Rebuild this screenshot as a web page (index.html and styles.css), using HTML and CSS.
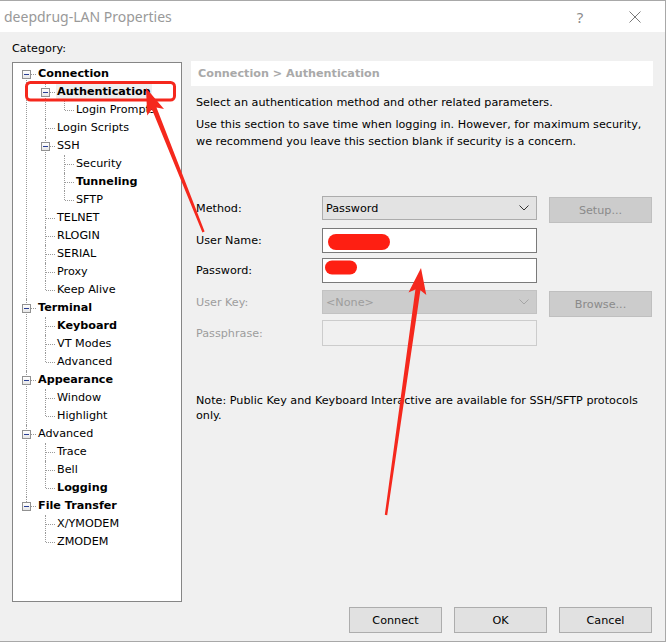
FILE: index.html
```html
<!DOCTYPE html>
<html>
<head>
<meta charset="utf-8">
<title>deepdrug-LAN Properties</title>
<link rel="stylesheet" href="styles.css">
</head>
<body>
<div class="window">
  <div class="titlebar">
    <span class="title">deepdrug-LAN Properties</span>
    <span class="help">?</span>
    <span class="close"><svg width="12" height="12" viewBox="0 0 12 12"><path d="M0.5 0.5L11.5 11.5M11.5 0.5L0.5 11.5" stroke="#7a7a7a" stroke-width="1" fill="none"/></svg></span>
  </div>
  <div class="main">
    <div class="left">
      <div class="cat-label">Category:</div>
      <div class="tree-box">
        <ul class="tree">
          <li><span class="exp"></span><span class="label b">Connection</span>
            <ul>
              <li><span class="exp"></span><span class="label b sel">Authentication</span>
                <ul><li><span class="label">Login Prompts</span></li></ul>
              </li>
              <li><span class="label">Login Scripts</span></li>
              <li><span class="exp"></span><span class="label">SSH</span>
                <ul>
                  <li><span class="label">Security</span></li>
                  <li><span class="label b">Tunneling</span></li>
                  <li><span class="label">SFTP</span></li>
                </ul>
              </li>
              <li><span class="label">TELNET</span></li>
              <li><span class="label">RLOGIN</span></li>
              <li><span class="label">SERIAL</span></li>
              <li><span class="label">Proxy</span></li>
              <li><span class="label">Keep Alive</span></li>
            </ul>
          </li>
          <li><span class="exp"></span><span class="label b">Terminal</span>
            <ul>
              <li><span class="label b">Keyboard</span></li>
              <li><span class="label">VT Modes</span></li>
              <li><span class="label">Advanced</span></li>
            </ul>
          </li>
          <li><span class="exp"></span><span class="label b">Appearance</span>
            <ul>
              <li><span class="label">Window</span></li>
              <li><span class="label">Highlight</span></li>
            </ul>
          </li>
          <li><span class="exp"></span><span class="label">Advanced</span>
            <ul>
              <li><span class="label">Trace</span></li>
              <li><span class="label">Bell</span></li>
              <li><span class="label b">Logging</span></li>
            </ul>
          </li>
          <li><span class="exp"></span><span class="label b">File Transfer</span>
            <ul>
              <li><span class="label">X/YMODEM</span></li>
              <li><span class="label">ZMODEM</span></li>
            </ul>
          </li>
        </ul>
      </div>
    </div>
    <div class="right">
      <div class="crumb">Connection &gt; Authentication</div>
      <div class="panel">
        <p class="desc first">Select an authentication method and other related parameters.</p>
        <p class="desc">Use this section to save time when logging in. However, for maximum security,<br>we recommend you leave this section blank if security is a concern.</p>
        <div class="form">
          <span class="flabel">Method:</span>
          <div class="select"><span>Password</span><svg width="10" height="6" viewBox="0 0 10 6"><path d="M0.5 0.5L5 5L9.5 0.5" stroke="#333" fill="none"/></svg></div>
          <button class="btn disabled setup">Setup...</button>

          <span class="flabel">User Name:</span>
          <div class="input"></div>
          <span></span>

          <span class="flabel">Password:</span>
          <div class="input"></div>
          <span></span>

          <span class="flabel dim">User Key:</span>
          <div class="select off"><span>&lt;None&gt;</span><svg width="10" height="6" viewBox="0 0 10 6"><path d="M0.5 0.5L5 5L9.5 0.5" stroke="#a6a6a6" fill="none"/></svg></div>
          <button class="btn disabled browse">Browse...</button>

          <span class="flabel dim">Passphrase:</span>
          <div class="input off"></div>
          <span></span>
        </div>
        <p class="note">Note: Public Key and Keyboard Interactive are available for SSH/SFTP protocols<br>only.</p>
      </div>
    </div>
  </div>
  <div class="footer">
    <button class="btn">Connect</button>
    <button class="btn">OK</button>
    <button class="btn">Cancel</button>
  </div>
  <svg class="annot" width="666" height="643" viewBox="0 0 666 643">
    <rect x="26.5" y="82.5" width="148" height="17.5" rx="4" fill="none" stroke="#f5281d" stroke-width="3"/>
    <polygon points="146,88 164,108.9 156.5,107.5 204.6,231.6 202.4,232.4 151.9,109.3 147.2,115.5" fill="#f5281d"/>
    <polygon points="421,268 426.3,295 420.4,290.2 387.2,515.2 384.8,514.8 415.4,289.5 408.5,292.4" fill="#f5281d"/>
    <rect x="328" y="234" width="62" height="16" rx="8" fill="#fe1f12"/>
    <rect x="325" y="260.5" width="32" height="14" rx="7" fill="#fe1f12"/>
  </svg>
</div>
</body>
</html>
```

FILE: styles.css
```css
html, body {
  margin: 0;
  padding: 0;
  background: #ffffff;
}

.window {
  position: relative;
  width: 666px;
  height: 642px;
  box-sizing: border-box;
  border-top: 1px solid #a8a8a8;
  border-right: 1px solid #a8a8a8;
  border-bottom: 1px solid #a8a8a8;
  background: #f0f0f0;
  font-family: "DejaVu Sans", sans-serif;
  font-size: 11.2px;
  color: #000;
  display: flex;
  flex-direction: column;
}

.titlebar {
  height: 31px;
  background: #ffffff;
  display: flex;
  align-items: center;
  padding-left: 4px;
  flex: none;
}

.title {
  font-family: "Noto Sans", sans-serif;
  font-size: 14px;
  color: #999999;
  flex: 1;
}

.help {
  font-family: "Noto Sans", sans-serif;
  font-size: 15px;
  color: #8a8a8a;
  width: 10px;
  text-align: center;
  margin-right: 44px;
}

.close {
  width: 12px;
  height: 12px;
  margin-right: 24px;
  display: flex;
}

.main {
  display: grid;
  grid-template-columns: 170px 462px;
  column-gap: 9px;
  padding: 8px 0 0 12px;
  height: 570px;
  box-sizing: border-box;
  flex: none;
}

.cat-label {
  line-height: 18px;
  height: 18px;
  margin-bottom: 4px;
}

.tree-box {
  height: 540px;
  box-sizing: border-box;
  border: 1px solid #868686;
  background: #ffffff;
  overflow: hidden;
}

.tree, .tree ul {
  list-style: none;
  margin: 0;
  padding: 0;
}

.tree {
  padding: 2px 0 0 6px;
}

.tree li {
  position: relative;
  padding-left: 19px;
}

.tree li::before {
  content: "";
  position: absolute;
  left: 7px;
  top: 0;
  bottom: 0;
  border-left: 1px dotted #9a9a9a;
}

.tree li:last-child::before {
  bottom: auto;
  height: 9px;
}

.tree > li:first-child::before {
  top: 9px;
}

.tree li::after {
  content: "";
  position: absolute;
  left: 8px;
  top: 9px;
  width: 9px;
  border-top: 1px dotted #9a9a9a;
}

.exp {
  position: absolute;
  left: 3px;
  top: 5px;
  width: 9px;
  height: 9px;
  box-sizing: border-box;
  border: 1px solid #919191;
  background: linear-gradient(#ffffff, #e6e6e6);
  z-index: 1;
}

.exp::after {
  content: "";
  position: absolute;
  left: 1px;
  top: 3px;
  width: 5px;
  height: 1px;
  background: #2a3f95;
}

.label {
  display: inline-block;
  height: 18px;
  line-height: 18px;
  white-space: nowrap;
  padding: 0 1px;
  margin-left: -1px;
}

.label.b {
  font-weight: bold;
}

.label.sel {
  background: #efefef;
}

.right {
  padding-top: 21px;
}

.crumb {
  height: 25px;
  line-height: 26px;
  background: #ffffff;
  padding-left: 7px;
  font-weight: bold;
  color: #a9a9a9;
}

.panel {
  padding-left: 5px;
}

.desc {
  margin: 5px 0 0 0;
  line-height: 17px;
  white-space: nowrap;
}

.desc.first {
  margin-top: 8px;
}

.form {
  display: grid;
  grid-template-columns: 114px 215px 103px;
  grid-template-rows: 32px 33px 27px 36px 26px;
  column-gap: 12px;
  align-items: center;
  margin-top: 42px;
}

.flabel {
  white-space: nowrap;
}

.flabel.dim {
  color: #9d9d9d;
}

.select {
  height: 24px;
  box-sizing: border-box;
  border: 1px solid #acacac;
  background: #e3e3e3;
  display: flex;
  align-items: center;
  justify-content: space-between;
  padding: 0 7px 0 3px;
}

.select.off {
  background: #cccccc;
  border-color: #c2c2c2;
  color: #9d9d9d;
}

.input {
  height: 25px;
  box-sizing: border-box;
  border: 1px solid #7a7a7a;
  background: #ffffff;
}

.input.off {
  height: 26px;
  border-color: #cccccc;
  background: #f0f0f0;
}

.btn {
  font-family: "DejaVu Sans", sans-serif;
  font-size: 11.2px;
  color: #000;
  height: 26px;
  width: 93px;
  box-sizing: border-box;
  border: 1px solid #adadad;
  background: #e1e1e1;
  padding: 0;
  margin: 0;
}

.btn.disabled {
  width: 103px;
  background: #cccccc;
  border-color: #bfbfbf;
  color: #8a8a8a;
}

.btn.setup {
  align-self: start;
  margin-top: 5px;
}

.btn.browse {
  align-self: start;
  margin-top: 7px;
}

.note {
  margin: 47px 0 0 0;
  line-height: 15px;
  white-space: nowrap;
}

.footer {
  display: flex;
  justify-content: flex-end;
  gap: 12px;
  padding: 5px 13px 8px 0;
  flex: none;
}

.annot {
  position: absolute;
  left: 0;
  top: -1px;
  pointer-events: none;
}
```
